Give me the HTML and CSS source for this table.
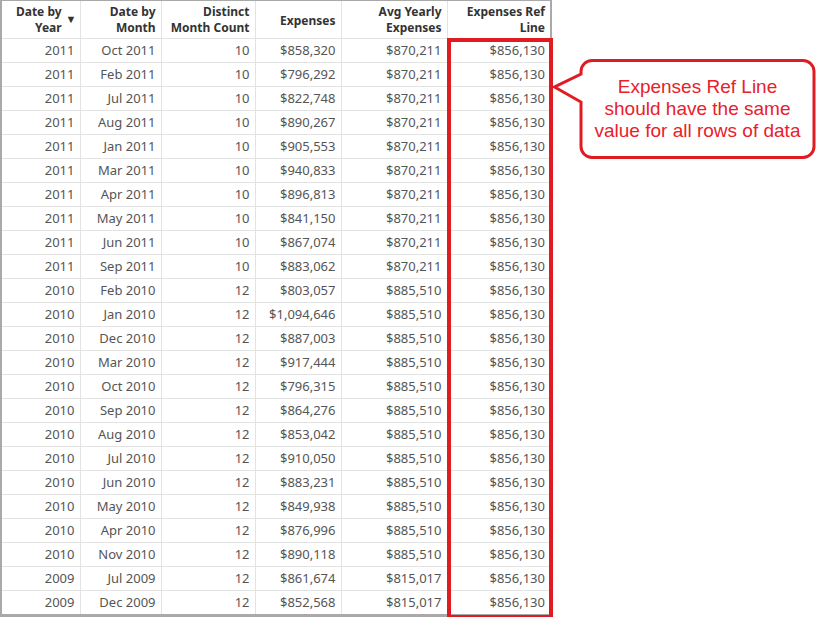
FILE: index.html
```html
<!DOCTYPE html>
<html>
<head>
<meta charset="utf-8">
<link rel="stylesheet" href="styles.css">
</head>
<body>
<div class="canvas">
  <div class="sheet">
    <table class="grid">
      <colgroup>
        <col class="c0"><col class="c1"><col class="c2"><col class="c3"><col class="c4"><col class="c5">
      </colgroup>
      <thead>
        <tr>
          <th class="sorted"><span class="hl">Date by<br>Year</span><span class="arrow">&#9660;</span></th>
          <th>Date by<br>Month</th>
          <th>Distinct<br>Month Count</th>
          <th class="single">Expenses</th>
          <th>Avg Yearly<br>Expenses</th>
          <th>Expenses Ref<br>Line</th>
        </tr>
      </thead>
      <tbody>
        <tr><td>2011</td><td>Oct 2011</td><td>10</td><td>$858,320</td><td>$870,211</td><td>$856,130</td></tr>
        <tr><td>2011</td><td>Feb 2011</td><td>10</td><td>$796,292</td><td>$870,211</td><td>$856,130</td></tr>
        <tr><td>2011</td><td>Jul 2011</td><td>10</td><td>$822,748</td><td>$870,211</td><td>$856,130</td></tr>
        <tr><td>2011</td><td>Aug 2011</td><td>10</td><td>$890,267</td><td>$870,211</td><td>$856,130</td></tr>
        <tr><td>2011</td><td>Jan 2011</td><td>10</td><td>$905,553</td><td>$870,211</td><td>$856,130</td></tr>
        <tr><td>2011</td><td>Mar 2011</td><td>10</td><td>$940,833</td><td>$870,211</td><td>$856,130</td></tr>
        <tr><td>2011</td><td>Apr 2011</td><td>10</td><td>$896,813</td><td>$870,211</td><td>$856,130</td></tr>
        <tr><td>2011</td><td>May 2011</td><td>10</td><td>$841,150</td><td>$870,211</td><td>$856,130</td></tr>
        <tr><td>2011</td><td>Jun 2011</td><td>10</td><td>$867,074</td><td>$870,211</td><td>$856,130</td></tr>
        <tr><td>2011</td><td>Sep 2011</td><td>10</td><td>$883,062</td><td>$870,211</td><td>$856,130</td></tr>
        <tr><td>2010</td><td>Feb 2010</td><td>12</td><td>$803,057</td><td>$885,510</td><td>$856,130</td></tr>
        <tr><td>2010</td><td>Jan 2010</td><td>12</td><td>$1,094,646</td><td>$885,510</td><td>$856,130</td></tr>
        <tr><td>2010</td><td>Dec 2010</td><td>12</td><td>$887,003</td><td>$885,510</td><td>$856,130</td></tr>
        <tr><td>2010</td><td>Mar 2010</td><td>12</td><td>$917,444</td><td>$885,510</td><td>$856,130</td></tr>
        <tr><td>2010</td><td>Oct 2010</td><td>12</td><td>$796,315</td><td>$885,510</td><td>$856,130</td></tr>
        <tr><td>2010</td><td>Sep 2010</td><td>12</td><td>$864,276</td><td>$885,510</td><td>$856,130</td></tr>
        <tr><td>2010</td><td>Aug 2010</td><td>12</td><td>$853,042</td><td>$885,510</td><td>$856,130</td></tr>
        <tr><td>2010</td><td>Jul 2010</td><td>12</td><td>$910,050</td><td>$885,510</td><td>$856,130</td></tr>
        <tr><td>2010</td><td>Jun 2010</td><td>12</td><td>$883,231</td><td>$885,510</td><td>$856,130</td></tr>
        <tr><td>2010</td><td>May 2010</td><td>12</td><td>$849,938</td><td>$885,510</td><td>$856,130</td></tr>
        <tr><td>2010</td><td>Apr 2010</td><td>12</td><td>$876,996</td><td>$885,510</td><td>$856,130</td></tr>
        <tr><td>2010</td><td>Nov 2010</td><td>12</td><td>$890,118</td><td>$885,510</td><td>$856,130</td></tr>
        <tr><td>2009</td><td>Jul 2009</td><td>12</td><td>$861,674</td><td>$815,017</td><td>$856,130</td></tr>
        <tr><td>2009</td><td>Dec 2009</td><td>12</td><td>$852,568</td><td>$815,017</td><td>$856,130</td></tr>
      </tbody>
    </table>
    <div class="refbox"></div>
  </div>
  <div class="callout">
    <svg class="bubble" width="270" height="114" viewBox="0 0 270 114">
      <path d="M40 11.5 H251 A11 11 0 0 1 262 22.5 V97.5 A11 11 0 0 1 251 108.5 H40 A11 11 0 0 1 29 97.5 V53 L2.5 38 L29 25 V22.5 A11 11 0 0 1 40 11.5 Z" fill="#fff" stroke="#e01b22" stroke-width="3" stroke-linejoin="miter"/>
    </svg>
    <p class="note">Expenses Ref Line<br>should have the same<br>value for all rows of data</p>
  </div>
</div>
</body>
</html>
```
FILE: styles.css
```css
html, body {
  margin: 0;
  padding: 0;
  background: #ffffff;
}

.canvas {
  position: relative;
  width: 817px;
  height: 617px;
  overflow: hidden;
}

.sheet {
  position: relative;
  width: 548px;
  border-left: 2px solid #a9a9a9;
  border-top: 1px solid #a9a9a9;
  border-right: 2px solid #a9a9a9;
  border-bottom: 3px solid #a9a9a9;
}

.grid {
  border-collapse: collapse;
  table-layout: fixed;
  width: 548px;
  font-family: "Noto Sans", "Open Sans", sans-serif;
  font-size: 13px;
}

.c0 { width: 78px; }
.c1 { width: 81px; }
.c2 { width: 94px; }
.c3 { width: 86px; }
.c4 { width: 106px; }
.c5 { width: 103px; }

.grid th {
  height: 37px;
  padding: 2px 5px 0 0;
  text-align: right;
  vertical-align: middle;
  font-size: 12px;
  font-weight: 700;
  color: #333333;
  line-height: 16px;
  border-right: 1px solid #e3e3e3;
  border-bottom: 1px solid #e3e3e3;
  box-sizing: border-box;
}

.grid th.single {
  vertical-align: top;
  padding-top: 12px;
}

.grid th.sorted {
  padding-right: 3px;
}

.hl {
  display: inline-block;
  vertical-align: middle;
}

.arrow {
  display: inline-block;
  vertical-align: top;
  margin-left: 4px;
  margin-top: 9px;
  font-size: 11px;
  line-height: 12px;
  color: #333333;
}

.grid td {
  height: 24px;
  padding: 0 5px 0 0;
  text-align: right;
  color: #555555;
  border-right: 1px solid #e3e3e3;
  border-bottom: 1px solid #e3e3e3;
  box-sizing: border-box;
  white-space: nowrap;
}

.grid tr > :last-child {
  border-right: none;
}

.grid tbody tr:last-child td {
  border-bottom: none;
}

.refbox {
  position: absolute;
  left: 445px;
  top: 37px;
  width: 98px;
  height: 573px;
  border: 4px solid #e01b22;
}

.callout {
  position: absolute;
  left: 552px;
  top: 49px;
  width: 270px;
  height: 114px;
}

.bubble {
  position: absolute;
  left: 0;
  top: 0;
}

.note {
  position: absolute;
  left: 29px;
  top: 27px;
  width: 233px;
  margin: 0;
  text-align: center;
  font-family: "Liberation Sans", Arial, sans-serif;
  font-size: 19px;
  line-height: 22px;
  color: #e8212b;
}
```
